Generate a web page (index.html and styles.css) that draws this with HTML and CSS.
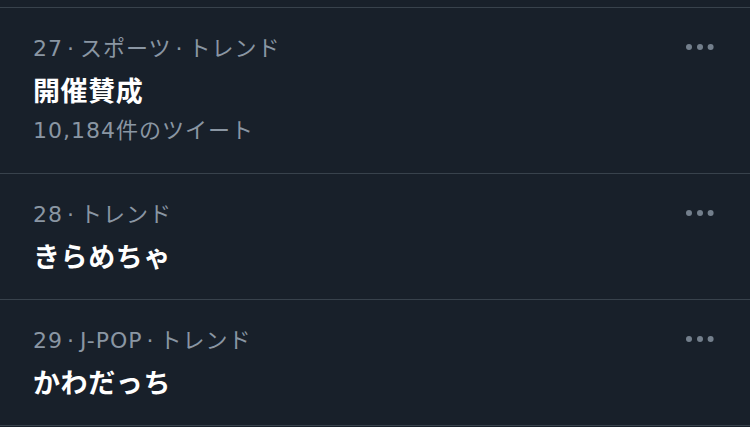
FILE: index.html
```html
<!DOCTYPE html>
<html lang="ja">
<head>
    <meta charset="UTF-8">
    <meta name="viewport" content="width=device-width, initial-scale=1.0">
    <title>トレンド</title>
    <link rel="stylesheet" href="styles.css">
</head>
<body>
    <div class="list">
        <div class="trend">
            <div class="info">
                <div class="meta">27<span class="sep">·</span>スポーツ<span class="sep">·</span>トレンド</div>
                <div class="name">開催賛成</div>
                <div class="count">10,184件のツイート</div>
            </div>
            <svg class="more" viewBox="0 0 32 12"><circle cx="5" cy="6" r="3"/><circle cx="16" cy="6" r="3"/><circle cx="26.6" cy="6" r="3"/></svg>
        </div>
        <div class="trend">
            <div class="info">
                <div class="meta">28<span class="sep">·</span>トレンド</div>
                <div class="name">きらめちゃ</div>
            </div>
            <svg class="more" viewBox="0 0 32 12"><circle cx="5" cy="6" r="3"/><circle cx="16" cy="6" r="3"/><circle cx="26.6" cy="6" r="3"/></svg>
        </div>
        <div class="trend">
            <div class="info">
                <div class="meta">29<span class="sep">·</span>J-POP<span class="sep">·</span>トレンド</div>
                <div class="name">かわだっち</div>
            </div>
            <svg class="more" viewBox="0 0 32 12"><circle cx="5" cy="6" r="3"/><circle cx="16" cy="6" r="3"/><circle cx="26.6" cy="6" r="3"/></svg>
        </div>
    </div>
</body>
</html>
```

FILE: styles.css
```css
* {
    margin: 0;
    padding: 0;
    box-sizing: border-box;
}
body {
    background: #18202a;
    font-family: "Noto Sans CJK JP", "Noto Sans", sans-serif;
    padding-top: 7px;
    overflow: hidden;
}
.list {
    border-top: 1px solid #38424c;
}
.trend {
    display: flex;
    padding: 26px 34px 28px 33px;
    border-bottom: 1px solid #38424c;
}
.trend:first-child {
    padding-bottom: 27px;
}
.info {
    flex: 1;
}
.meta,
.count {
    color: #8a96a3;
    font-family: "DejaVu Sans", "Noto Sans CJK JP", sans-serif;
    font-size: 22px;
    letter-spacing: 1px;
    line-height: 30px;
}
.sep {
    margin: 0 5px 0 4px;
}
.name {
    color: #fff;
    font-size: 27px;
    font-weight: bold;
    letter-spacing: 0.6px;
    line-height: 30px;
    margin-top: 11px;
}
.count {
    margin-top: 11px;
}
.more {
    width: 32px;
    height: 12px;
    margin-top: 7px;
    fill: #737f8c;
}
```
